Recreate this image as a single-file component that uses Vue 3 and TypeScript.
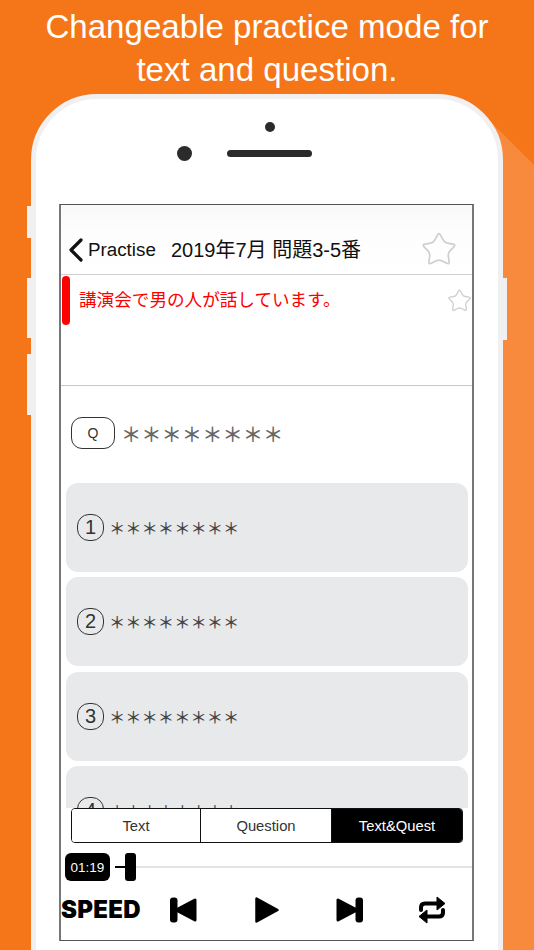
<script setup lang="ts">
const options: string[] = ['1', '2', '3', '4']
const segments: string[] = ['Text', 'Question', 'Text&Quest']
const mask = '＊＊＊＊＊＊＊＊'

function roundedStar(): string {
  const pts: [number, number][] = []
  for (let i = 0; i < 10; i++) {
    const radius = i % 2 === 0 ? 12.6 : 6.6
    const angle = -Math.PI / 2 + (i * Math.PI) / 5
    pts.push([12 + radius * Math.cos(angle), 12.8 + radius * Math.sin(angle)])
  }
  const f = 0.26
  let d = ''
  pts.forEach((c, i) => {
    const p = pts[(i + 9) % 10]
    const n = pts[(i + 1) % 10]
    const ax = c[0] + (p[0] - c[0]) * f
    const ay = c[1] + (p[1] - c[1]) * f
    const bx = c[0] + (n[0] - c[0]) * f
    const by = c[1] + (n[1] - c[1]) * f
    d += `${i === 0 ? 'M' : 'L'}${ax.toFixed(2)} ${ay.toFixed(2)} Q${c[0].toFixed(2)} ${c[1].toFixed(2)} ${bx.toFixed(2)} ${by.toFixed(2)} `
  })
  return d + 'Z'
}
const starPath = roundedStar()
</script>

<template>
  <div class="page">
    <div class="glow"></div>
    <h1 class="headline">Changeable practice mode for<br />text and question.</h1>
    <div class="phone">
      <i class="side side-a"></i>
      <i class="side side-b"></i>
      <i class="side side-c"></i>
      <i class="side side-d"></i>
      <div class="earpiece">
        <div class="sensor"></div>
        <div class="ear-row">
          <div class="camera"></div>
          <div class="speaker"></div>
        </div>
      </div>
      <div class="screen">
        <header class="nav">
          <svg class="chevron" viewBox="0 0 16 24" width="16" height="24">
            <path d="M13 2 L3 12 L13 22" fill="none" stroke="#111" stroke-width="3.2" stroke-linecap="round" stroke-linejoin="round" />
          </svg>
          <span class="back">Practise</span>
          <span class="title">2019年7月 問題3-5番</span>
          <svg class="star-big" viewBox="0 0 24 24" width="34" height="34">
            <path :d="starPath" fill="none" stroke="#cfcfcf" stroke-width="1.2" stroke-linejoin="round" />
          </svg>
        </header>
        <section class="sentence">
          <div class="marker"></div>
          <p class="sentence-text">講演会で男の人が話しています。</p>
          <svg class="star-small" viewBox="0 0 24 24" width="23" height="23">
            <path :d="starPath" fill="none" stroke="#cfcfcf" stroke-width="1.4" stroke-linejoin="round" />
          </svg>
        </section>
        <section class="scroll">
          <div class="question">
            <span class="q-pill">Q</span>
            <span class="q-mask">{{ mask }}</span>
          </div>
          <div v-for="n in options" :key="n" class="option">
            <span class="num">{{ n }}</span>
            <span class="opt-mask">{{ mask }}</span>
          </div>
        </section>
        <div class="segments">
          <button v-for="(s, i) in segments" :key="s" class="segment" :class="{ active: i === 2 }">{{ s }}</button>
        </div>
        <div class="slider">
          <span class="time">01:19</span>
          <span class="track-done"></span>
          <span class="thumb"></span>
          <span class="track"></span>
        </div>
        <div class="controls">
          <span class="speed">SPEED</span>
          <svg class="c-prev" viewBox="0 0 28 26" width="28" height="26">
            <rect x="0" y="0.5" width="7.5" height="25" rx="3" fill="#000" />
            <path d="M25 3 V23 L6 13 Z" fill="#000" stroke="#000" stroke-width="3" stroke-linejoin="round" />
          </svg>
          <svg class="c-play" viewBox="0 0 26 28" width="26" height="28">
            <path d="M2.5 2.5 V25.5 L23.5 14 Z" fill="#000" stroke="#000" stroke-width="2.5" stroke-linejoin="round" />
          </svg>
          <svg class="c-next" viewBox="0 0 28 26" width="28" height="26">
            <rect x="20.5" y="0.5" width="7.5" height="25" rx="3" fill="#000" />
            <path d="M3 3 V23 L22 13 Z" fill="#000" stroke="#000" stroke-width="3" stroke-linejoin="round" />
          </svg>
          <svg class="c-repeat" viewBox="0 0 28 28" width="28" height="28">
            <path d="M3 14 V11.5 Q3 7.5 7 7.5 H20" fill="none" stroke="#000" stroke-width="4" stroke-linecap="round" />
            <path d="M19 1 L27 7.5 L19 14 Z" fill="#000" stroke="#000" stroke-width="1" stroke-linejoin="round" />
            <path d="M25 14 V16.5 Q25 20.5 21 20.5 H8" fill="none" stroke="#000" stroke-width="4" stroke-linecap="round" />
            <path d="M9 14 L1 20.5 L9 27 Z" fill="#000" stroke="#000" stroke-width="1" stroke-linejoin="round" />
          </svg>
        </div>
      </div>
    </div>
  </div>
</template>

<style>
html,
body {
  margin: 0;
  padding: 0;
}
</style>

<style scoped>
.page {
  position: relative;
  width: 534px;
  height: 950px;
  overflow: hidden;
  background: #f57519;
  font-family: 'Liberation Sans', 'Noto Sans CJK JP', sans-serif;
}
.glow {
  position: absolute;
  inset: 0;
  background: #f78a3d;
  clip-path: polygon(490px 121px, 534px 165px, 534px 950px, 490px 950px);
}
.headline {
  position: relative;
  margin: 0;
  height: 94px;
  padding-top: 5px;
  box-sizing: border-box;
  text-align: center;
  color: #fff;
  font-size: 33.1px;
  line-height: 43px;
  font-weight: 400;
}
.phone {
  position: relative;
  box-sizing: border-box;
  width: 472px;
  height: 900px;
  margin-left: 31px;
  border: 5px solid #f0f0f2;
  border-radius: 66px 66px 0 0;
  background: #fff;
  padding: 0 23px;
}
.side {
  position: absolute;
  width: 4px;
  background: #f0f0f2;
}
.side-a {
  left: -9px;
  top: 107px;
  height: 32px;
}
.side-b {
  left: -9px;
  top: 179px;
  height: 60px;
}
.side-c {
  left: -9px;
  top: 255px;
  height: 61px;
}
.side-d {
  right: -9px;
  top: 179px;
  height: 62px;
}
.earpiece {
  height: 105px;
  box-sizing: border-box;
  padding-top: 23px;
}
.sensor {
  width: 10px;
  height: 10px;
  margin-left: 206px;
  border-radius: 50%;
  background: #2b2b2b;
}
.ear-row {
  display: flex;
  align-items: center;
  margin-top: 14px;
  padding-left: 118px;
}
.camera {
  width: 15px;
  height: 15px;
  border-radius: 50%;
  background: #2b2b2b;
}
.speaker {
  width: 85px;
  height: 7px;
  margin-left: 35px;
  border-radius: 4px;
  background: #2b2b2b;
}
.screen {
  box-sizing: border-box;
  width: 415px;
  height: 737px;
  display: flex;
  flex-direction: column;
  border: 1px solid #555;
  border-left: 2px solid #777;
  border-right: 2px solid #777;
  background: #fff;
}
.nav {
  flex: none;
  height: 70px;
  box-sizing: border-box;
  display: flex;
  align-items: center;
  padding: 20px 0 0 7px;
  border-bottom: 1px solid #d0d0d0;
  background: linear-gradient(#f9f9f9, #fdfdfd 40%, #fff);
  color: #111;
}
.chevron {
  flex: none;
}
.back {
  margin-left: 4px;
  font-size: 18.8px;
  line-height: 24px;
  padding-top: 1px;
  width: 83px;
}
.title {
  font-size: 20px;
  line-height: 24px;
  white-space: nowrap;
}
.star-big {
  margin-left: auto;
  margin-right: 16px;
  margin-top: -1px;
}
.sentence {
  flex: none;
  position: relative;
  height: 111px;
  box-sizing: border-box;
  display: flex;
  align-items: flex-start;
  padding-left: 1px;
  border-bottom: 1px solid #c8c8c8;
}
.marker {
  flex: none;
  width: 8px;
  height: 49px;
  margin-top: 1px;
  border-radius: 4px;
  background: #f00;
}
.sentence-text {
  margin: 13px 0 0 9px;
  font-size: 17.6px;
  line-height: 24px;
  color: #f00;
  white-space: nowrap;
}
.star-small {
  margin: 14px 1px 0 auto;
}
.scroll {
  flex: 1;
  min-height: 0;
  overflow: hidden;
  display: flex;
  flex-direction: column;
  padding: 0 4px 0 5px;
}
.question {
  flex: none;
  display: flex;
  align-items: center;
  height: 93px;
  margin-bottom: 4px;
  box-sizing: border-box;
  padding-left: 5px;
}
.q-pill {
  box-sizing: border-box;
  width: 44px;
  height: 32px;
  display: flex;
  align-items: center;
  justify-content: center;
  border: 1px solid #333;
  border-radius: 11px;
  font-size: 14px;
  color: #333;
}
.q-mask {
  margin-left: 6px;
  font-family: 'Noto Sans CJK JP', sans-serif;
  font-size: 20.3px;
  font-weight: 500;
  line-height: 32px;
  color: #666;
}
.option {
  flex: none;
  height: 89px;
  box-sizing: border-box;
  display: flex;
  align-items: center;
  margin-bottom: 5.3px;
  padding-left: 11px;
  border-radius: 12px;
  background: #e8e9eb;
}
.num {
  box-sizing: border-box;
  width: 27px;
  height: 27px;
  display: flex;
  align-items: center;
  justify-content: center;
  border: 1px solid #333;
  border-radius: 12px;
  font-size: 20px;
  color: #333;
}
.opt-mask {
  margin-left: 5px;
  font-family: 'Noto Sans CJK JP', sans-serif;
  font-size: 16.3px;
  font-weight: 500;
  line-height: 27px;
  color: #444;
}
.segments {
  flex: none;
  display: flex;
  box-sizing: border-box;
  width: 392px;
  height: 35px;
  margin-left: 10px;
  border: 1px solid #111;
  border-radius: 4px;
  overflow: hidden;
  background: #fff;
}
.segment {
  flex: 1;
  margin: 0;
  padding: 0;
  border: 0;
  border-right: 1px solid #111;
  background: #fff;
  font-family: inherit;
  font-size: 14.8px;
  color: #333;
}
.segment:first-child {
  flex: 0 0 129px;
}
.segment.active {
  border-right: 0;
  background: #000;
  color: #fff;
}
.slider {
  flex: none;
  display: flex;
  align-items: center;
  height: 28px;
  margin-top: 10px;
  padding-left: 4px;
}
.time {
  flex: none;
  box-sizing: border-box;
  width: 45px;
  height: 28px;
  display: flex;
  align-items: center;
  justify-content: center;
  border-radius: 6px;
  background: #000;
  color: #fff;
  font-size: 13.5px;
}
.track-done {
  flex: none;
  width: 10px;
  height: 2px;
  margin-left: 5px;
  background: #000;
}
.thumb {
  flex: none;
  width: 11px;
  height: 28px;
  border-radius: 3px;
  background: #000;
}
.track {
  flex: 1;
  height: 2px;
  background: #e4e4e4;
}
.controls {
  flex: none;
  display: flex;
  align-items: center;
  height: 59px;
  box-sizing: border-box;
  padding-bottom: 2px;
}
.speed {
  flex: none;
  width: 109px;
  font-family: Inter, 'Liberation Sans', sans-serif;
  font-weight: 900;
  font-size: 24px;
  letter-spacing: 0.3px;
  color: #000;
}
.c-prev {
  flex: none;
}
.c-play {
  flex: none;
  margin-left: 56px;
}
.c-next {
  flex: none;
  margin-left: 55px;
}
.c-repeat {
  flex: none;
  margin-left: 55px;
}
</style>
